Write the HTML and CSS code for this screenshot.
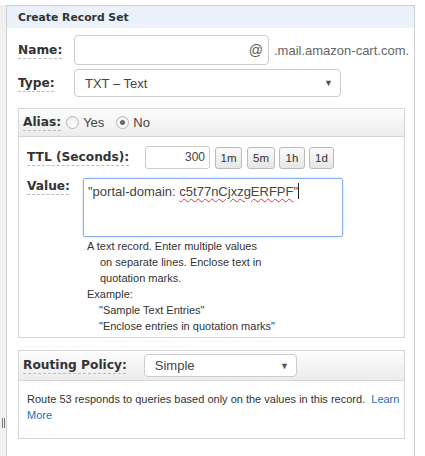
FILE: index.html
```html
<!DOCTYPE html>
<html>
<head>
<meta charset="utf-8">
<link rel="stylesheet" href="styles.css">
</head>
<body>
<div class="page">
  <div class="strip"><span class="grip"></span></div>
  <div class="panel">
    <div class="title">Create Record Set</div>
    <div class="row name-row">
      <span class="label">Name:</span>
      <div class="name-input"><span class="at">@</span></div>
      <span class="domain">.mail.amazon-cart.com.</span>
    </div>
    <div class="row type-row">
      <span class="label">Type:</span>
      <div class="select type-select"><span>TXT – Text</span><span class="arrow">▼</span></div>
    </div>
    <div class="box alias-box">
      <div class="box-head">
        <span class="label">Alias:</span>
        <span class="radio"></span><span class="radio-text">Yes</span>
        <span class="radio checked"></span><span class="radio-text">No</span>
      </div>
      <div class="box-body">
        <div class="ttl-row">
          <span class="label ttl-label">TTL (Seconds):</span>
          <div class="ttl-input">300</div>
          <div class="btn b1">1m</div>
          <div class="btn b2">5m</div>
          <div class="btn b3">1h</div>
          <div class="btn b4">1d</div>
        </div>
        <div class="value-row">
          <span class="label value-label">Value:</span>
          <div class="value-col">
            <div class="textarea">"portal-domain: <span class="spell">c5t77nCjxzgERFPF</span>"<span class="caret"></span></div>
            <div class="help">
              <div>A text record. Enter multiple values</div>
              <div class="ind">on separate lines. Enclose text in</div>
              <div class="ind">quotation marks.</div>
              <div>Example:</div>
              <div class="ind2">"Sample Text Entries"</div>
              <div class="ind2">"Enclose entries in quotation marks"</div>
            </div>
          </div>
        </div>
      </div>
    </div>
    <div class="box routing-box">
      <div class="box-head routing-head">
        <span class="label">Routing Policy:</span>
        <div class="select routing-select"><span>Simple</span><span class="arrow">▼</span></div>
      </div>
      <div class="routing-body">Route 53 responds to queries based only on the values in this record.&nbsp; <a class="link">Learn More</a></div>
    </div>
  </div>
</div>
</body>
</html>
```

FILE: styles.css
```css
html, body {
  margin: 0;
  padding: 0;
  background: #fff;
  height: 456px;
  overflow: hidden;
}
body {
  font-family: "Liberation Sans", Arial, sans-serif;
  color: #333;
}
.page {
  display: flex;
  padding-top: 5px;
  height: 451px;
}
.strip {
  width: 6px;
  background: #f0f0f0;
  position: relative;
}
.grip {
  position: absolute;
  left: 2px;
  top: 413px;
  width: 1px;
  height: 10px;
  border-left: 1px solid #777;
  border-right: 1px solid #777;
  box-sizing: content-box;
}
.panel {
  width: 407px;
  border: 1px solid #cfcfcf;
  border-bottom: none;
  padding-bottom: 40px;
}
.title {
  height: 22px;
  background: #eaf1fb;
  font-family: "DejaVu Sans", Verdana, sans-serif;
  font-weight: bold;
  font-size: 10.8px;
  line-height: 24px;
  padding-left: 11px;
  color: #333;
}
.label {
  font-family: "DejaVu Sans", Verdana, sans-serif;
  font-weight: bold;
  font-size: 12.2px;
  color: #333;
  line-height: 15px;
  text-decoration: underline dashed #bbb;
  text-underline-offset: 4px;
  text-decoration-thickness: 1px;
}
.row {
  display: flex;
  align-items: center;
  padding-left: 11px;
}
.row .label {
  width: 56px;
}
.name-row {
  margin-top: 7px;
  height: 30px;
}
.name-input {
  border: 1px solid #ccc;
  border-radius: 4px;
  display: flex;
  align-items: center;
  justify-content: flex-end;
  padding-right: 5px;
  box-sizing: border-box;
  width: 195px;
  height: 30px;
  font-size: 14px;
  color: #555;
}
.domain {
  margin-left: 5px;
  font-size: 13px;
  color: #666;
}
.type-row {
  margin-top: 4px;
  height: 28px;
}
.select {
  border: 1px solid #ccc;
  border-radius: 4px;
  box-sizing: border-box;
  display: flex;
  align-items: center;
  justify-content: space-between;
  font-size: 13px;
  color: #444;
  background: #fff;
}
.type-select {
  width: 267px;
  height: 28px;
  padding: 0 7px 0 10px;
}
.arrow {
  font-size: 9px;
  color: #555;
}
.box {
  margin-left: 11px;
  width: 387px;
  box-sizing: border-box;
  border: 1px solid #d6d6d6;
}
.alias-box {
  margin-top: 11px;
  height: 230px;
}
.box-head {
  height: 28px;
  box-sizing: border-box;
  background: linear-gradient(#fdfdfd, #ececec);
  border-bottom: 1px solid #d6d6d6;
  display: flex;
  align-items: center;
  padding-left: 4px;
}
.radio {
  width: 11px;
  height: 11px;
  border-radius: 50%;
  border: 1px solid #b5b5b5;
  background: linear-gradient(#eee, #fff);
  margin-left: 5px;
  position: relative;
}
.radio.checked {
  margin-left: 12px;
}
.radio.checked::after {
  content: "";
  position: absolute;
  left: 3px;
  top: 3px;
  width: 5px;
  height: 5px;
  border-radius: 50%;
  background: #666;
}
.radio-text {
  font-size: 13px;
  color: #444;
  margin-left: 4px;
}
.box-body {
  padding-left: 8px;
}
.ttl-row {
  display: flex;
  align-items: center;
  margin-top: 9px;
  height: 23px;
}
.ttl-label {
  width: 118px;
}
.ttl-input {
  width: 65px;
  height: 23px;
  box-sizing: border-box;
  border: 1px solid #ccc;
  border-radius: 3px;
  text-align: right;
  font-size: 12px;
  line-height: 21px;
  padding-right: 4px;
  color: #444;
}
.btn {
  height: 22px;
  box-sizing: border-box;
  border: 1px solid #bbb;
  border-radius: 3px;
  background: linear-gradient(#fafafa, #e6e6e6);
  font-size: 11.5px;
  line-height: 20px;
  color: #333;
  text-align: center;
}
.b1 { width: 27px; margin-left: 5px; }
.b2 { width: 28px; margin-left: 5px; }
.b3 { width: 26px; margin-left: 4px; }
.b4 { width: 25px; margin-left: 4px; }
.value-row {
  display: flex;
  margin-top: 9px;
}
.value-label {
  width: 56px;
  margin-top: 1px;
  align-self: flex-start;
}
.textarea {
  width: 260px;
  height: 59px;
  box-sizing: border-box;
  border: 1px solid #8ab0ea;
  box-shadow: 0 0 2px #a9c6f0;
  border-radius: 2px;
  font-size: 13px;
  color: #444;
  padding: 4px 4px;
  line-height: 17px;
}
.spell {
  text-decoration: underline wavy #e33;
  text-decoration-thickness: 1px;
  text-underline-offset: 2px;
}
.caret {
  display: inline-block;
  width: 1px;
  height: 16px;
  background: #222;
  vertical-align: -3px;
}
.help {
  font-size: 11px;
  line-height: 16px;
  color: #333;
  padding-left: 4px;
  margin-top: 1px;
}
.ind {
  padding-left: 13px;
}
.ind2 {
  padding-left: 12px;
}
.routing-box {
  margin-top: 12px;
  height: 89px;
}
.routing-head {
  height: 30px;
}
.routing-select {
  width: 153px;
  height: 23px;
  margin-left: 17px;
  padding: 0 7px 0 10px;
}
.routing-body {
  font-size: 11px;
  line-height: 16px;
  color: #333;
  padding: 10px 0 0 8px;
}
.link {
  color: #1a70c0;
}
```
